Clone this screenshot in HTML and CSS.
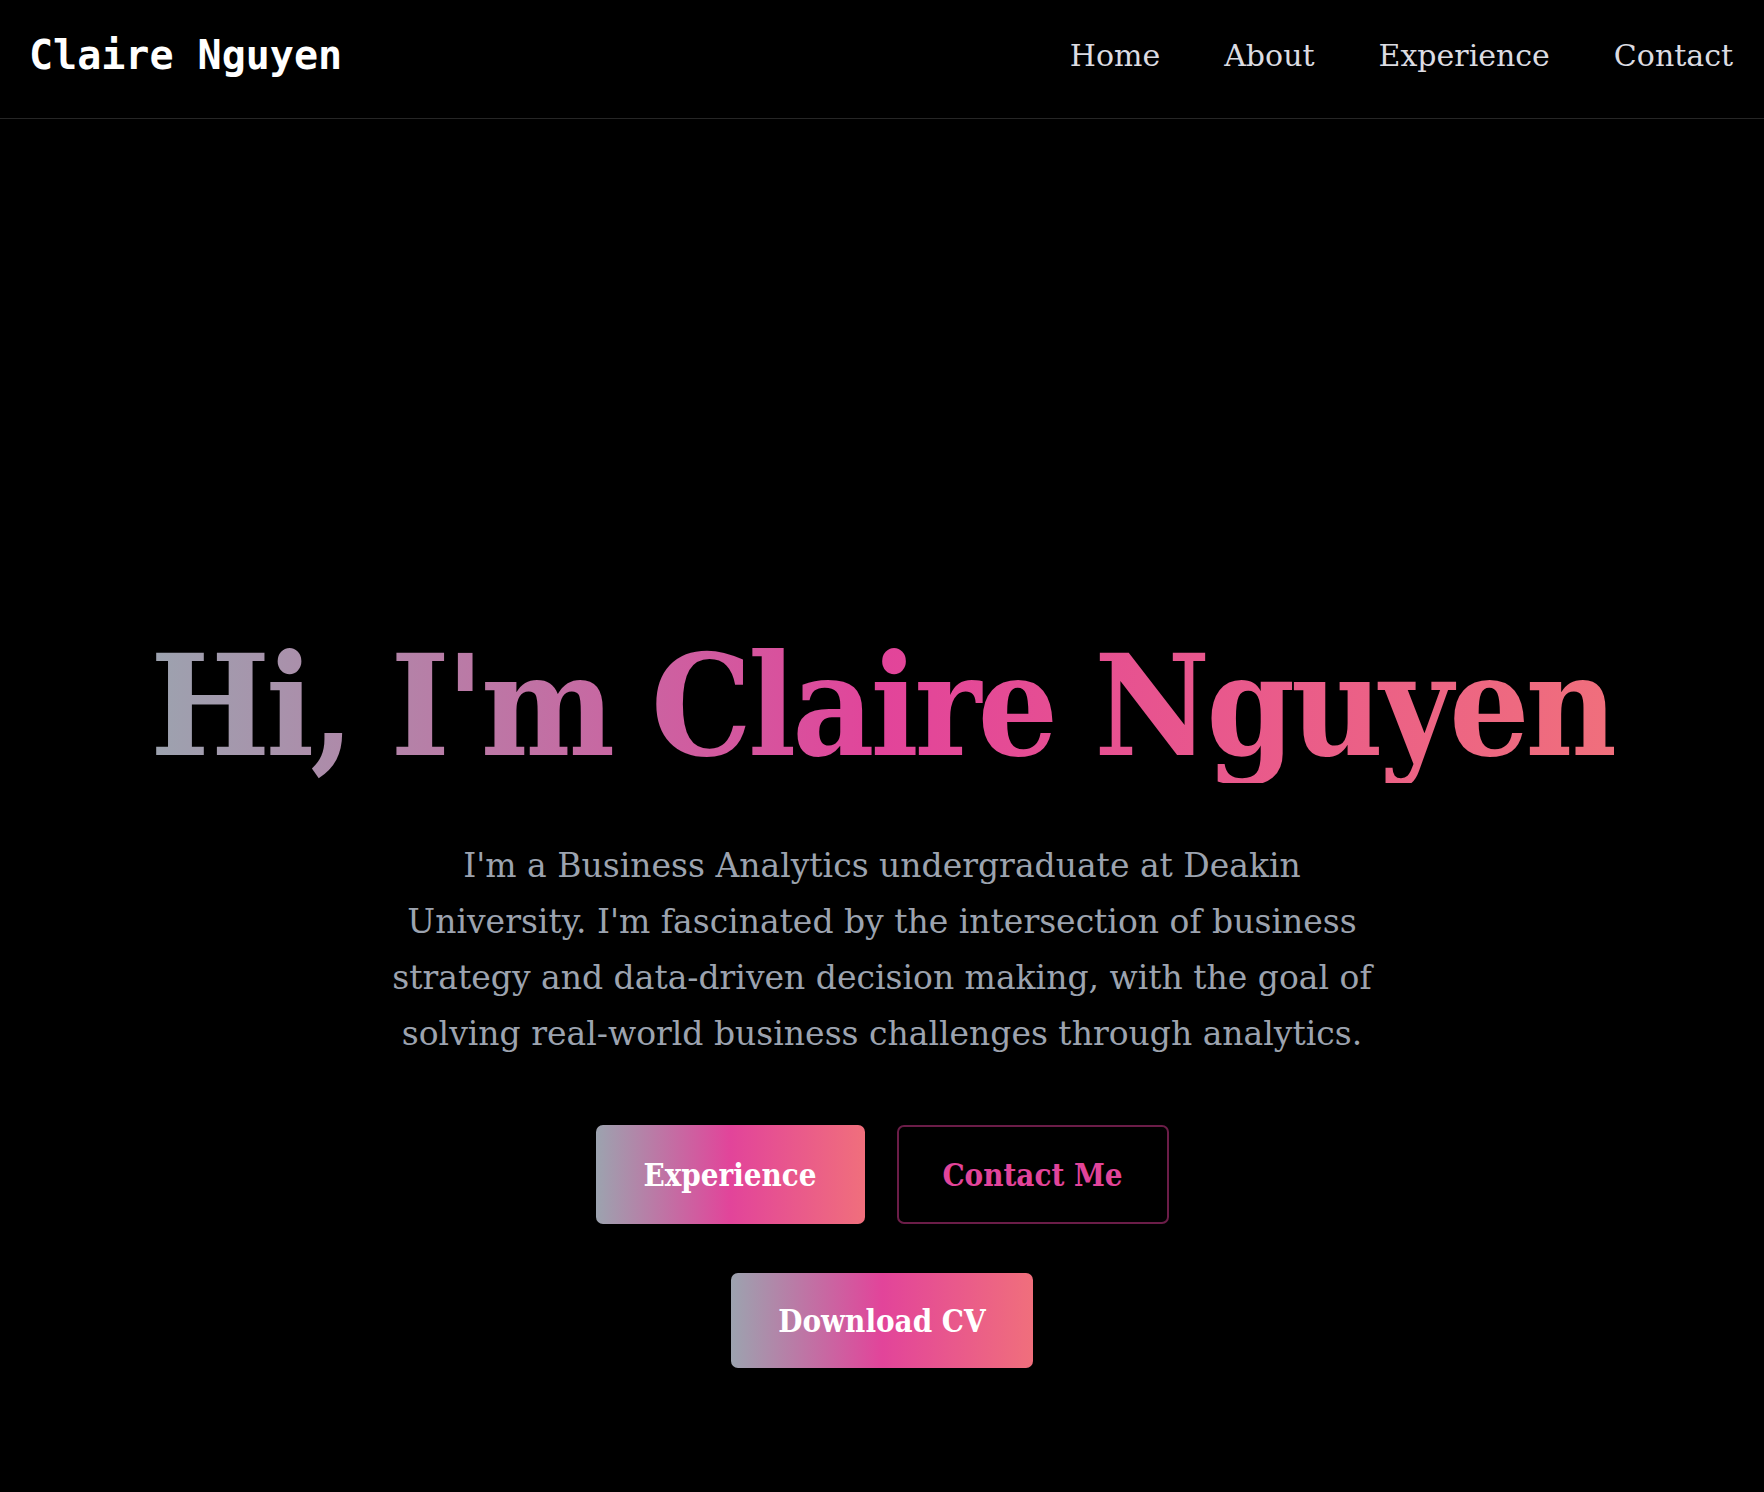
FILE: index.html
```html
<!DOCTYPE html>
<html lang="en">
<head>
<meta charset="utf-8">
<title>Claire Nguyen</title>
<link rel="stylesheet" href="styles.css">
</head>
<body>
<header class="nav">
  <div class="logo">Claire Nguyen</div>
  <nav class="links">
    <a href="#">Home</a>
    <a href="#">About</a>
    <a href="#">Experience</a>
    <a href="#">Contact</a>
  </nav>
</header>
<main class="hero">
  <h1 class="title">Hi, I'm Claire Nguyen</h1>
  <p class="intro">I'm a Business Analytics undergraduate at Deakin University. I'm fascinated by the intersection of business strategy and data-driven decision making, with the goal of solving real-world business challenges through analytics.</p>
  <div class="actions">
    <div class="row">
      <a class="btn btn-grad btn-exp" href="#">Experience</a>
      <a class="btn btn-outline" href="#">Contact Me</a>
    </div>
    <a class="btn btn-grad btn-cv" href="#">Download CV</a>
  </div>
</main>
</body>
</html>
```
FILE: styles.css
```css
body {
  margin: 0;
  background: #000;
  font-family: "DejaVu Serif", serif;
  color: #fff;
}
.nav {
  display: flex;
  justify-content: space-between;
  align-items: center;
  height: 110px;
  padding: 0 31px 8px 29px;
  border-bottom: 1px solid #262626;
}
.logo {
  font-family: "DejaVu Sans Mono", monospace;
  font-weight: 700;
  font-size: 40px;
  color: #fff;
}
.links {
  display: flex;
  gap: 64px;
}
.links a {
  color: #dcdce2;
  text-decoration: none;
  font-size: 30px;
}
.hero {
  display: flex;
  flex-direction: column;
  align-items: center;
  padding-top: 509px;
}
.title {
  margin: 0;
  font-size: 141px;
  font-stretch: condensed;
  letter-spacing: -4px;
  line-height: 1.1;
  font-weight: 700;
  background: linear-gradient(90deg, #9ca3af 0%, #e2449a 50%, #f06f7c 100%);
  -webkit-background-clip: text;
  background-clip: text;
  color: transparent;
}
.intro {
  margin: 55px 0 0;
  max-width: 1008px;
  text-align: center;
  font-size: 33px;
  line-height: 56px;
  color: #9ca3af;
}
.actions {
  display: flex;
  flex-direction: column;
  align-items: center;
  gap: 49px;
  margin-top: 63px;
}
.row {
  display: flex;
  gap: 32px;
}
.btn {
  display: flex;
  align-items: center;
  justify-content: center;
  box-sizing: border-box;
  border-radius: 7px;
  text-decoration: none;
  font-weight: 700;
  font-size: 31px;
  font-stretch: condensed;
}
.btn-grad {
  color: #fff;
  background: linear-gradient(90deg, #9ca3af 0%, #e2449a 50%, #f06f7c 100%);
}
.btn-exp {
  width: 269px;
  height: 99px;
}
.btn-outline {
  width: 272px;
  height: 99px;
  border: 2px solid #6b1d48;
  color: #e2449a;
}
.btn-cv {
  width: 302px;
  height: 95px;
}
```
